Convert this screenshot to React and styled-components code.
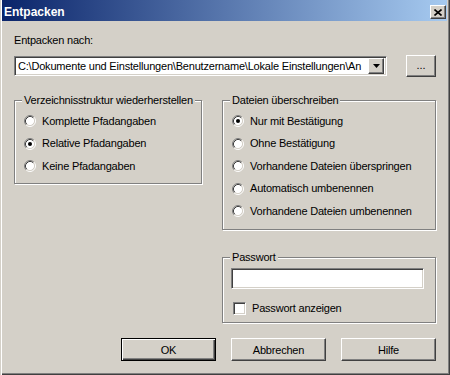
import React from 'react';
import styled, { createGlobalStyle } from 'styled-components';

const Global = createGlobalStyle`
  html, body { margin: 0; padding: 0; background: #D4D0C8; }
  body { font-family: "Liberation Sans", Arial, sans-serif; font-size: 11px; color: #000; letter-spacing: -0.2px; }
  * { box-sizing: border-box; }
`;

const Window = styled.div`
  width: 450px;
  height: 375px;
  display: flex;
  flex-direction: column;
  background: #D4D0C8;
  padding: 0 3px 3px 2px;
  box-shadow: inset 1px 0 #D4D0C8, inset 2px 0 #fff, inset -1px -1px #404040, inset -2px -2px #808080;
`;

const TitleBar = styled.div`
  height: 21px;
  flex: none;
  display: flex;
  align-items: center;
  padding: 3px 1px 0 2px;
  background: linear-gradient(to right, #0A246A, #A6CAF0);
`;

const Title = styled.div`
  flex: 1;
  color: #fff;
  font-weight: bold;
  font-size: 12px;
  line-height: 14px;
  letter-spacing: 0;
`;

const CloseButton = styled.div`
  width: 16px;
  height: 14px;
  display: flex;
  align-items: center;
  justify-content: center;
  background: #D4D0C8;
  border: 1px solid;
  border-color: #fff #404040 #404040 #fff;
  box-shadow: inset -1px -1px #808080;
  padding-right: 1px;
`;

const Body = styled.div`
  flex: 1;
  display: flex;
  flex-direction: column;
  padding: 13px 11px 11px 12px;
`;

const Label = styled.div`
  line-height: 13px;
`;

const PathRow = styled.div`
  display: flex;
  align-items: center;
  justify-content: space-between;
  height: 22px;
  margin-top: 8px;
`;

const Sunken = styled.div`
  background: #fff;
  border: 1px solid;
  border-color: #808080 #fff #fff #808080;
  box-shadow: inset 1px 1px #404040, inset -1px -1px #D4D0C8;
`;

const Combo = styled(Sunken)`
  width: 373px;
  height: 20px;
  display: flex;
  align-items: center;
  padding: 2px;
`;

const ComboText = styled.div`
  flex: 1;
  min-width: 0;
  overflow: hidden;
  white-space: nowrap;
  line-height: 16px;
  padding-left: 1px;
`;

const Raised = styled.div`
  display: flex;
  align-items: center;
  justify-content: center;
  background: #D4D0C8;
  border: 1px solid;
  border-color: #fff #404040 #404040 #fff;
  box-shadow: inset -1px -1px #808080, inset 1px 1px #D4D0C8;
`;

const DropButton = styled(Raised)`
  width: 16px;
  height: 16px;
  flex: none;
`;

const SmallButton = styled(Raised)`
  width: 30px;
  height: 22px;
  line-height: 12px;
  padding-bottom: 2px;
  letter-spacing: 0;
`;

const Columns = styled.div`
  display: grid;
  grid-template-columns: 188px 214px;
  column-gap: 20px;
  align-items: start;
  margin-top: 23px;
`;

const RightColumn = styled.div`
  display: flex;
  flex-direction: column;
  gap: 27px;
`;

const Group = styled.div`
  position: relative;
  height: ${p => p.$h}px;
  border: 1px solid #808080;
  box-shadow: 1px 1px 0 #fff, inset 1px 1px 0 #fff;
  padding: ${p => p.$pad};
  display: flex;
  flex-direction: column;
`;

const Legend = styled.div`
  position: absolute;
  left: 7px;
  top: -7px;
  padding: 0 2px 0 2px;
  background: #D4D0C8;
  line-height: 13px;
  white-space: nowrap;
`;

const OptionRow = styled.div`
  height: 22.5px;
  display: flex;
  align-items: center;
  gap: 6px;
  line-height: 13px;
  white-space: nowrap;
`;

const Input = styled(Sunken)`
  width: 193px;
  height: 21px;
`;

const CheckRow = styled.div`
  height: 20px;
  margin-top: 9px;
  display: flex;
  align-items: center;
  gap: 6px;
  padding-left: 2px;
`;

const CheckBox = styled(Sunken)`
  width: 13px;
  height: 13px;
`;

const ButtonRow = styled.div`
  margin-top: auto;
  display: flex;
  justify-content: flex-end;
  gap: 15px;
`;

const Button = styled(Raised)`
  width: 95px;
  height: 23px;
  ${p => p.$default && `
    border: 1px solid #000;
    box-shadow: inset 1px 1px #fff, inset -1px -1px #404040, inset -2px -2px #808080;
  `}
`;

const Radio = ({ checked }) => (
  <svg width="12" height="12" viewBox="0 0 12 12" style={{ flex: 'none' }}>
    <circle cx="6" cy="6" r="4.5" fill="#fff" />
    <path d="M2.11 9.89 A5.5 5.5 0 0 1 9.89 2.11" fill="none" stroke="#808080" strokeWidth="1" />
    <path d="M9.89 2.11 A5.5 5.5 0 0 1 2.11 9.89" fill="none" stroke="#fff" strokeWidth="1" />
    <path d="M2.82 9.18 A4.5 4.5 0 0 1 9.18 2.82" fill="none" stroke="#404040" strokeWidth="1" />
    <path d="M9.18 2.82 A4.5 4.5 0 0 1 2.82 9.18" fill="none" stroke="#D4D0C8" strokeWidth="1" />
    {checked && <circle cx="6" cy="6" r="2" fill="#000" />}
  </svg>
);

const Option = ({ label, checked }) => (
  <OptionRow>
    <Radio checked={checked} />
    <span>{label}</span>
  </OptionRow>
);

export default function App() {
  return (
    <>
      <Global />
      <Window>
        <TitleBar>
          <Title>Entpacken</Title>
          <CloseButton>
            <svg width="8" height="7" viewBox="0 0 8 7">
              <path d="M0.5 0.5 L7.5 6.5 M7.5 0.5 L0.5 6.5" stroke="#000" strokeWidth="1.6" fill="none" />
            </svg>
          </CloseButton>
        </TitleBar>
        <Body>
          <Label>Entpacken nach:</Label>
          <PathRow>
            <Combo>
              <ComboText>C:\Dokumente und Einstellungen\Benutzername\Lokale Einstellungen\An</ComboText>
              <DropButton>
                <svg width="7" height="4" viewBox="0 0 7 4">
                  <path d="M0 0 H7 L3.5 4 Z" fill="#000" />
                </svg>
              </DropButton>
            </Combo>
            <SmallButton>...</SmallButton>
          </PathRow>
          <Columns>
            <Group $h={84} $pad="9px 9px 5.5px 9px">
              <Legend>Verzeichnisstruktur wiederherstellen</Legend>
              <Option label="Komplette Pfadangaben" />
              <Option label="Relative Pfadangaben" checked />
              <Option label="Keine Pfadangaben" />
            </Group>
            <RightColumn>
              <Group $h={130} $pad="9px 9px 6.5px 9px">
                <Legend>Dateien überschreiben</Legend>
                <Option label="Nur mit Bestätigung" checked />
                <Option label="Ohne Bestätigung" />
                <Option label="Vorhandene Dateien überspringen" />
                <Option label="Automatisch umbenennen" />
                <Option label="Vorhandene Dateien umbenennen" />
              </Group>
              <Group $h={66} $pad="10px 8px 4px 8px">
                <Legend>Passwort</Legend>
                <Input />
                <CheckRow>
                  <CheckBox />
                  <span>Passwort anzeigen</span>
                </CheckRow>
              </Group>
            </RightColumn>
          </Columns>
          <ButtonRow>
            <Button $default>OK</Button>
            <Button>Abbrechen</Button>
            <Button>Hilfe</Button>
          </ButtonRow>
        </Body>
      </Window>
    </>
  );
}
